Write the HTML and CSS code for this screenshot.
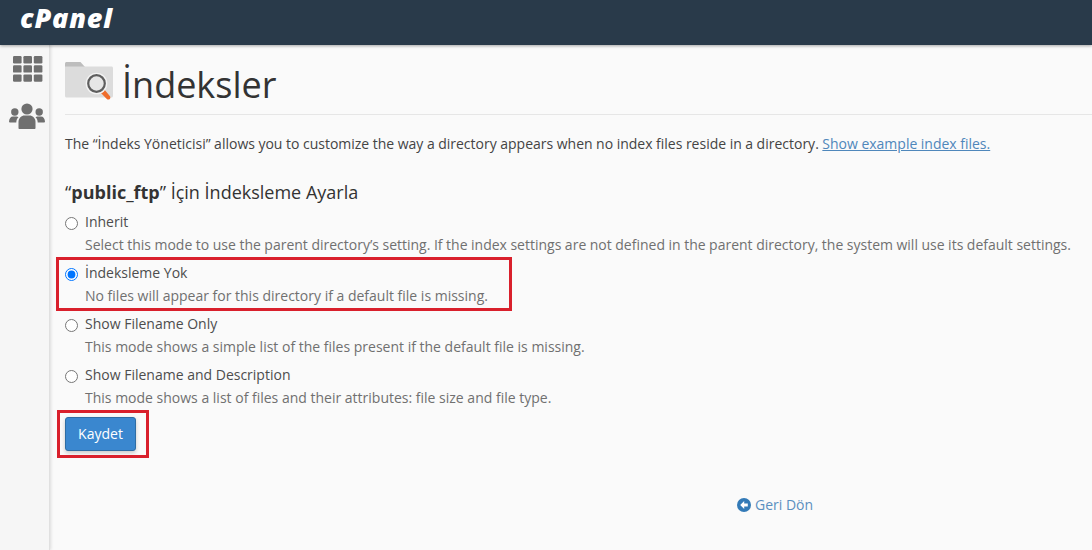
FILE: index.html
```html
<!DOCTYPE html>
<html lang="tr">
<head>
<meta charset="utf-8">
<title>İndeksler</title>
<link rel="stylesheet" href="styles.css">
</head>
<body>
<header class="topbar"><span class="logo">cPanel</span></header>
<div class="shell">
  <nav class="sidebar">
    <svg class="nav-grid" width="30" height="26" viewBox="0 0 30 26" fill="#6f6f6f">
      <rect x="0" y="0" width="8.6" height="7.4" rx="1.2"/><rect x="10.4" y="0" width="8.6" height="7.4" rx="1.2"/><rect x="20.8" y="0" width="8.6" height="7.4" rx="1.2"/>
      <rect x="0" y="9.2" width="8.6" height="7.4" rx="1.2"/><rect x="10.4" y="9.2" width="8.6" height="7.4" rx="1.2"/><rect x="20.8" y="9.2" width="8.6" height="7.4" rx="1.2"/>
      <rect x="0" y="18.4" width="8.6" height="7.4" rx="1.2"/><rect x="10.4" y="18.4" width="8.6" height="7.4" rx="1.2"/><rect x="20.8" y="18.4" width="8.6" height="7.4" rx="1.2"/>
    </svg>
    <svg class="nav-users" width="36" height="26" viewBox="0 0 36 26" fill="#6f6f6f">
      <circle cx="18" cy="6" r="5.6"/><circle cx="5.8" cy="9" r="3.7"/><circle cx="30.2" cy="9" r="3.7"/>
      <path d="M9.5 25v-6c0-4 3-6.500 6-6.500h5c3 0 6 2.500 6 6.500v6c0 .6-.5 1-1 1H10.500c-.6 0-1-.4-1-1z"/>
      <path d="M0 19c0-3.500 1.800-5.500 4-5.500h3.500c.8 0 1.500.3 2 .8C8 15.500 7.300 17.500 7.300 19.500H1c-.6 0-1-.2-1-.5z"/>
      <path d="M36 19c0-3.500-1.800-5.500-4-5.500h-3.500c-.8 0-1.500.3-2 .8 1.500 1.200 2.200 3.200 2.200 5.200H35c.6 0 1-.2 1-.5z"/>
    </svg>
  </nav>
  <main class="content">
    <div class="page-head">
      <svg class="page-icon" width="50" height="42" viewBox="0 0 50 42">
        <path d="M0 2.500C0 1.700.7 1 1.500 1h14l4.500 5H0z" fill="#bdbdbd"/>
        <path d="M0 5.500h46.500c.8 0 1.500.7 1.500 1.500V35c0 .8-.7 1.500-1.500 1.500H1.500C.7 36.500 0 35.800 0 35z" fill="#dcdcdc"/>
        <path d="M35 31l3.500-3.500 6.300 7.500c.8.900.8 2 0 2.900s-2.200.9-3 0z" fill="#ef6c2b"/>
        <circle cx="31.500" cy="22.500" r="10.800" fill="#f3f3f3"/>
        <circle cx="31.500" cy="22.500" r="8.300" fill="#e6e6e6" stroke="#5e5e5e" stroke-width="2.200"/>
      </svg>
      <h1 class="page-title">İndeksler</h1>
    </div>
    <p class="intro tight">The “İndeks Yöneticisi” allows you to customize the way a directory appears when no index files reside in a directory. <a class="link" href="#">Show example index files.</a></p>
    <h2 class="section-title">“<b>public_ftp</b>” İçin İndeksleme Ayarla</h2>
    <form class="options">
      <label class="option">
        <input type="radio" name="mode">
        <span class="option-text"><span class="option-name">Inherit</span><span class="option-desc tight">Select this mode to use the parent directory’s setting. If the index settings are not defined in the parent directory, the system will use its default settings.</span></span>
      </label>
      <label class="option">
        <input type="radio" name="mode" checked>
        <span class="option-text"><span class="option-name">İndeksleme Yok</span><span class="option-desc">No files will appear for this directory if a default file is missing.</span></span>
        <span class="mark mark-option"></span>
      </label>
      <label class="option">
        <input type="radio" name="mode">
        <span class="option-text"><span class="option-name">Show Filename Only</span><span class="option-desc">This mode shows a simple list of the files present if the default file is missing.</span></span>
      </label>
      <label class="option">
        <input type="radio" name="mode">
        <span class="option-text"><span class="option-name">Show Filename and Description</span><span class="option-desc">This mode shows a list of files and their attributes: file size and file type.</span></span>
      </label>
      <div class="actions">
        <button class="save" type="button">Kaydet</button>
        <span class="mark mark-save"></span>
      </div>
    </form>
    <div class="back-row">
      <a class="back" href="#">
        <svg width="14" height="14" viewBox="0 0 14 14"><circle cx="7" cy="7" r="7" fill="#337ab7"/><path d="M7.200 3L3.200 7l4 4V8.500h3.600v-3H7.200z" fill="#fff"/></svg>
        Geri Dön
      </a>
    </div>
  </main>
</div>
</body>
</html>
```
FILE: styles.css
```css
* { box-sizing: border-box; }
html, body { margin: 0; height: 550px; overflow: hidden; }
body { font-family: "Open Sans", sans-serif; font-size: 14px; line-height: 20px; color: #444; background: #fafafa; }

.topbar { position: relative; z-index: 2; height: 45px; background: #293a4a; box-shadow: 0 1px 3px rgba(0,0,0,.35); padding: 3px 0 0 20px; }
.logo { font-family: "Open Sans", sans-serif; font-weight: 800; font-style: italic; font-size: 27px; line-height: 30px; letter-spacing: .8px; color: #fff; }

.shell { display: flex; height: 505px; }
.sidebar { width: 50px; flex: none; background: #f6f6f6; border-right: 1px solid #e0e0e0; box-shadow: 1px 0 3px rgba(0,0,0,.12); display: flex; flex-direction: column; align-items: center; padding-top: 11px; gap: 21px; }
.nav-grid { margin-left: 7px; }
.nav-users { margin-left: 5px; }

.content { flex: 1; padding: 16px 0 0 15px; min-width: 0; }
.page-head { display: flex; align-items: flex-start; height: 54px; border-bottom: 1px solid #e6e6e6; }
.page-icon { margin-right: 7px; flex: none; }
.page-title { margin: 0; font-size: 36px; line-height: 47px; font-weight: 400; color: #333; }
.intro { margin: 19px 0 0; }
.tight { word-spacing: -.11px; }
.link { color: #4f87bb; text-decoration: underline; }
.section-title { margin: 26px 0 0; font-size: 18px; line-height: 24px; font-weight: 400; color: #333; }
.section-title b { font-weight: 700; }

.options { margin-top: 5px; }
.option { position: relative; display: flex; align-items: flex-start; height: 51px; }
.option input { margin: 8px 7px 0 0; width: 13px; height: 13px; flex: none; }
.option-text { display: flex; flex-direction: column; }
.option-name { line-height: 25px; color: #4d4d4d; }
.option-desc { line-height: 22px; color: #707070; white-space: nowrap; }

.mark { position: absolute; border: 3px solid #d9202c; pointer-events: none; }
.mark-option { left: -9px; top: -3px; width: 456px; height: 54px; }
.actions { position: relative; margin-top: 4px; }
.mark-save { left: -8px; top: -7px; width: 92px; height: 48px; }
.save { display: block; width: 71px; height: 34px; padding: 0; font: 14px/20px "Open Sans", sans-serif; color: #fff; background: #3a87cf; border: 1px solid #2e6da4; border-radius: 3px; box-shadow: 0 2px 4px rgba(0,0,0,.2); }

.back-row { margin-top: 44px; padding-left: 672px; }
.back { display: inline-flex; align-items: center; gap: 4px; color: #5b8fc0; text-decoration: none; }
```
